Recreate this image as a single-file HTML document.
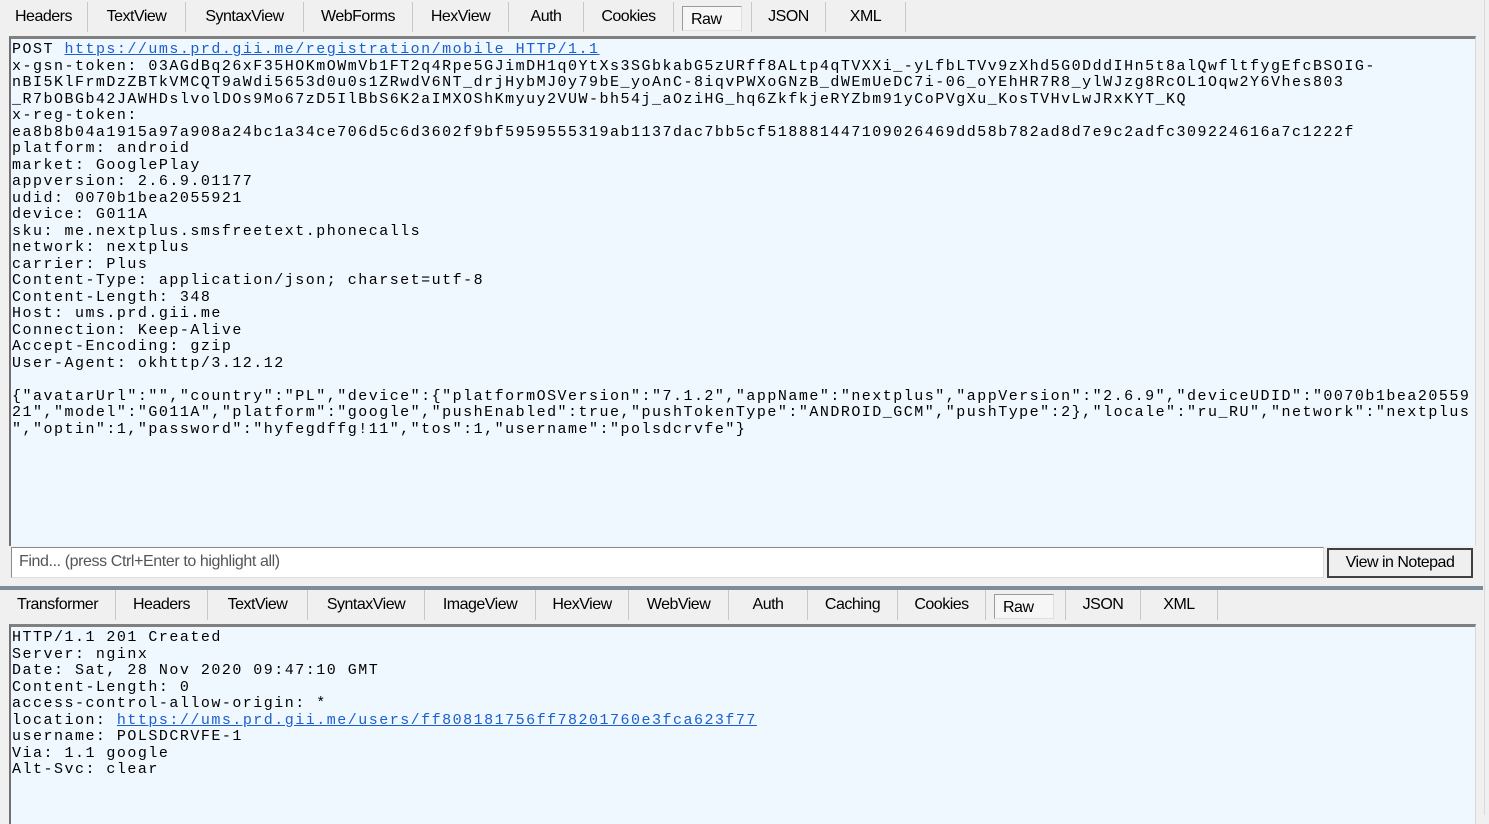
<!DOCTYPE html>
<html><head><meta charset="utf-8"><style>
*{margin:0;padding:0;box-sizing:border-box}
body{width:1489px;height:815px;background:#f0f0f0;position:relative;overflow:hidden;font-family:"Liberation Sans",sans-serif}
.tabs{position:absolute;left:0;height:30px;font-size:16px;color:#000;letter-spacing:-0.5px}
.tab{position:absolute;top:0;height:30px;line-height:30px;text-align:center;border-right:1px solid #c8c8c8}
.sel{background:#f6f6f6;border:1px solid #9a9a9a;border-right:1px solid #e0e0e0;border-bottom:1px solid #e0e0e0;top:4px;height:25px;line-height:25px;text-align:left;padding-left:8px}
.pane{position:absolute;background:#f0f8ff;border-top:3px solid #808080;border-left:2px solid #707070;border-right:1px solid #d8d8d8}
pre{font-family:"Liberation Mono",monospace;font-size:15px;letter-spacing:1.49px;line-height:16.5px;color:#000;padding:3px 0 0 1px}
a{color:#1a5fd0;text-decoration:underline}
</style></head><body>
<div style="position:absolute;right:4px;top:0;width:1px;height:815px;background:#d8d8d8"></div>
<div class="tabs" style="top:2px">
<div class="tab" style="left:0;width:88px">Headers</div>
<div class="tab" style="left:88px;width:98px">TextView</div>
<div class="tab" style="left:186px;width:118px">SyntaxView</div>
<div class="tab" style="left:304px;width:109px">WebForms</div>
<div class="tab" style="left:413px;width:96px">HexView</div>
<div class="tab" style="left:509px;width:75px">Auth</div>
<div class="tab" style="left:584px;width:90px">Cookies</div>
<div class="tab sel" style="left:682px;width:60px">Raw</div>
<div class="tab" style="left:742px;width:10px"></div>
<div class="tab" style="left:752px;width:74px">JSON</div>
<div class="tab" style="left:826px;width:80px">XML</div>
</div>
<div class="pane" style="left:9px;top:36px;width:1467px;height:510px">
<pre>POST <a>https://ums.prd.gii.me/registration/mobile HTTP/1.1</a>
x-gsn-token: 03AGdBq26xF35HOKmOWmVb1FT2q4Rpe5GJimDH1q0YtXs3SGbkabG5zURff8ALtp4qTVXXi_-yLfbLTVv9zXhd5G0DddIHn5t8alQwfltfygEfcBSOIG-
nBI5KlFrmDzZBTkVMCQT9aWdi5653d0u0s1ZRwdV6NT_drjHybMJ0y79bE_yoAnC-8iqvPWXoGNzB_dWEmUeDC7i-06_oYEhHR7R8_ylWJzg8RcOL1Oqw2Y6Vhes803
_R7bOBGb42JAWHDslvolDOs9Mo67zD5IlBbS6K2aIMXOShKmyuy2VUW-bh54j_aOziHG_hq6ZkfkjeRYZbm91yCoPVgXu_KosTVHvLwJRxKYT_KQ
x-reg-token:
ea8b8b04a1915a97a908a24bc1a34ce706d5c6d3602f9bf5959555319ab1137dac7bb5cf518881447109026469dd58b782ad8d7e9c2adfc309224616a7c1222f
platform: android
market: GooglePlay
appversion: 2.6.9.01177
udid: 0070b1bea2055921
device: G011A
sku: me.nextplus.smsfreetext.phonecalls
network: nextplus
carrier: Plus
Content-Type: application/json; charset=utf-8
Content-Length: 348
Host: ums.prd.gii.me
Connection: Keep-Alive
Accept-Encoding: gzip
User-Agent: okhttp/3.12.12

{"avatarUrl":"","country":"PL","device":{"platformOSVersion":"7.1.2","appName":"nextplus","appVersion":"2.6.9","deviceUDID":"0070b1bea20559
21","model":"G011A","platform":"google","pushEnabled":true,"pushTokenType":"ANDROID_GCM","pushType":2},"locale":"ru_RU","network":"nextplus
","optin":1,"password":"hyfegdffg!11","tos":1,"username":"polsdcrvfe"}</pre>
</div>
<div style="position:absolute;left:11px;top:547px;width:1313px;height:31px;background:#fff;border:1px solid #8a8a8a;border-right-color:#ddd;border-bottom-color:#ddd;font-size:16px;color:#555;line-height:28px;padding-left:7px;letter-spacing:-0.4px">Find... (press Ctrl+Enter to highlight all)</div>
<div style="position:absolute;left:1327px;top:548px;width:146px;height:30px;background:#efefef;border:2px solid #404040;font-size:16px;line-height:26px;text-align:center;letter-spacing:-0.5px">View in Notepad</div>
<div style="position:absolute;left:0;top:586px;width:1483px;height:4px;background:#7d8c99"></div>
<div class="tabs" style="top:590px">
<div class="tab" style="left:0;width:116px">Transformer</div>
<div class="tab" style="left:116px;width:92px">Headers</div>
<div class="tab" style="left:208px;width:100px">TextView</div>
<div class="tab" style="left:308px;width:117px">SyntaxView</div>
<div class="tab" style="left:425px;width:111px">ImageView</div>
<div class="tab" style="left:536px;width:93px">HexView</div>
<div class="tab" style="left:629px;width:100px">WebView</div>
<div class="tab" style="left:729px;width:79px">Auth</div>
<div class="tab" style="left:808px;width:90px">Caching</div>
<div class="tab" style="left:898px;width:88px">Cookies</div>
<div class="tab sel" style="left:994px;width:60px">Raw</div>
<div class="tab" style="left:1054px;width:12px"></div>
<div class="tab" style="left:1066px;width:75px">JSON</div>
<div class="tab" style="left:1141px;width:77px">XML</div>
</div>
<div class="pane" style="left:9px;top:624px;width:1467px;height:200px">
<pre>HTTP/1.1 201 Created
Server: nginx
Date: Sat, 28 Nov 2020 09:47:10 GMT
Content-Length: 0
access-control-allow-origin: *
location: <a>https://ums.prd.gii.me/users/ff808181756ff78201760e3fca623f77</a>
username: POLSDCRVFE-1
Via: 1.1 google
Alt-Svc: clear</pre>
</div>
</body></html>
